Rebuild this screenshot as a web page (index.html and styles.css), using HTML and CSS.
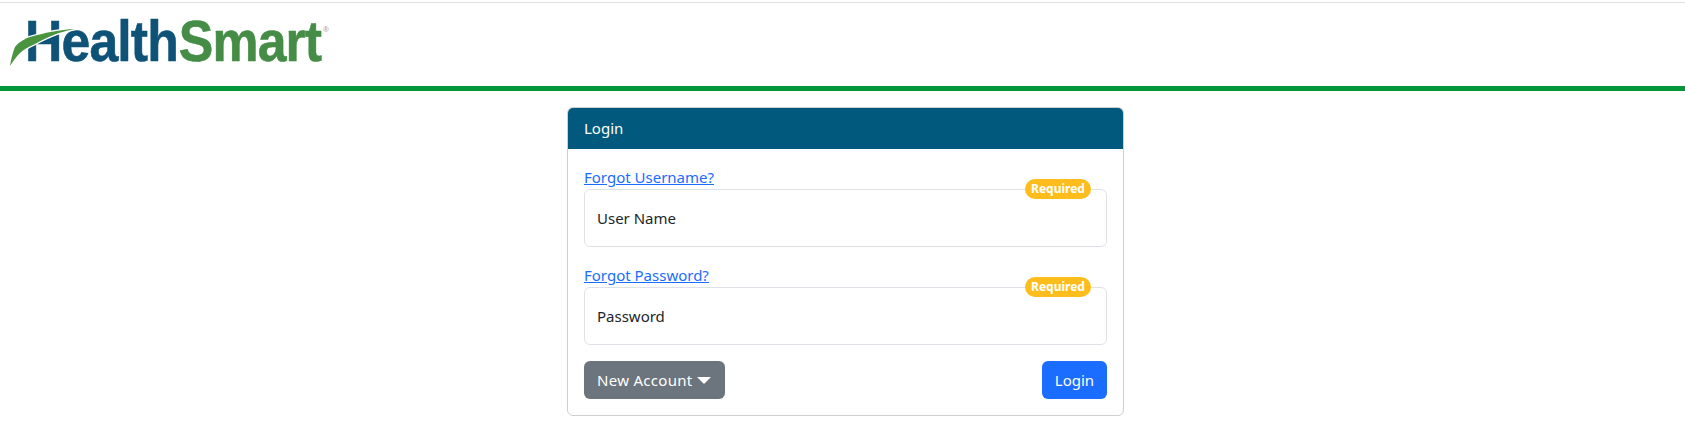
FILE: index.html
```html
<!DOCTYPE html>
<html lang="en">
<head>
<meta charset="utf-8">
<title>HealthSmart Login</title>
<link rel="stylesheet" href="styles.css">
</head>
<body>
<header class="site-header">
  <div class="logo">
    <span class="logo-text"><span class="logo-blue">Health</span><span class="logo-green">Smart</span></span><sup class="logo-reg">®</sup>
    <svg class="logo-swoosh" width="70" height="42" viewBox="0 0 70 42" aria-hidden="true">
      <path d="M0 40 C1 33 3 26 5 21 C8 17 14 13 20 11 C34 7 50 3.5 65 3 C60 4 58 4.5 56 5 C44 8 34 13 25 18 C18 21 13 24 10 27 C6 31 3 35 0 40Z" fill="#4a9440" stroke="#fff" stroke-width="2.5" paint-order="stroke"/>
    </svg>
  </div>
</header>
<main class="page">
  <section class="card">
    <h1 class="card-header">Login</h1>
    <form class="card-body">
      <a class="forgot" href="#">Forgot Username?</a>
      <div class="field">
        <input class="control" type="text" placeholder="User Name">
        <span class="badge">Required</span>
      </div>
      <a class="forgot" href="#">Forgot Password?</a>
      <div class="field">
        <input class="control" type="password" placeholder="Password">
        <span class="badge">Required</span>
      </div>
      <div class="actions">
        <button class="btn btn-gray" type="button">New Account<span class="caret"></span></button>
        <button class="btn btn-blue" type="submit">Login</button>
      </div>
    </form>
  </section>
</main>
</body>
</html>
```

FILE: styles.css
```css
* { box-sizing: border-box; }
html, body { margin: 0; padding: 0; }
body {
  background: #fff;
  color: #212529;
  font-family: "Noto Sans", "Open Sans", sans-serif;
  font-size: 15px;
  line-height: 24px;
}
.site-header {
  height: 89px;
  margin-top: 2px;
  border-top: 1px solid #dedede;
  border-bottom: 5px solid #009639;
  padding: 8px 0 0 25px;
}
.logo {
  position: relative;
  display: flex;
  align-items: flex-start;
  width: 310px;
  height: 60px;
  font-family: "Liberation Sans", Arial, sans-serif;
  font-size: 58px;
  line-height: 60px;
  font-weight: 700;
}
.logo-text {
  flex: none;
  width: 298px;
  letter-spacing: -1px;
  white-space: nowrap;
  -webkit-text-stroke: 0.6px currentColor;
  transform: scaleX(0.893);
  transform-origin: left top;
}
.logo-blue { color: #0e5278; }
.logo-green { color: #458c46; margin-left: 1px; }
.logo-reg {
  font-size: 8px;
  font-weight: 400;
  line-height: 10px;
  color: #9a9a9a;
  margin: 14px 0 0 0;
}
.logo-swoosh {
  position: absolute;
  left: -15px;
  top: 15px;
}
.page {
  display: flex;
  justify-content: center;
  padding: 16px 0 0 6px;
}
.card {
  width: 557px;
  border: 1px solid #cfcfcf;
  border-radius: 6px;
  overflow: hidden;
}
.card-header {
  margin: 0;
  height: 41px;
  padding: 8px 16px;
  background: #015a7e;
  color: #fff;
  font-size: 15px;
  font-weight: 400;
  line-height: 24px;
}
.card-body {
  display: flex;
  flex-direction: column;
  padding: 16px;
}
.forgot {
  align-self: flex-start;
  color: #1a6dff;
  text-decoration: underline;
  line-height: 24px;
}
.field {
  position: relative;
  margin-bottom: 16px;
}
.control {
  display: block;
  width: 100%;
  height: 58px;
  padding: 0 12px;
  border: 1px solid #dee2e6;
  border-radius: 6px;
  background: #fff;
  font: inherit;
  color: #212529;
  outline: none;
}
.control::placeholder { color: #212529; opacity: 1; }
.badge {
  position: absolute;
  top: -10px;
  right: 16px;
  width: 66px;
  height: 20px;
  border-radius: 10px;
  background: #fdbd1c;
  color: #fff;
  font-size: 12px;
  font-weight: 700;
  line-height: 20px;
  text-align: center;
}
.actions {
  display: flex;
  justify-content: space-between;
}
.btn {
  display: inline-flex;
  align-items: center;
  height: 38px;
  padding: 0 0 0 13px;
  border: 0;
  border-radius: 6px;
  color: #fff;
  font: inherit;
  white-space: nowrap;
}
.btn-gray { background: #6c757d; width: 141px; letter-spacing: 0.3px; }
.btn-blue { background: #1a6dff; width: 65px; padding: 0; justify-content: center; }
.caret {
  width: 0;
  height: 0;
  margin-left: 4px;
  border-left: 7px solid transparent;
  border-right: 7px solid transparent;
  border-top: 7px solid #fff;
}
```
